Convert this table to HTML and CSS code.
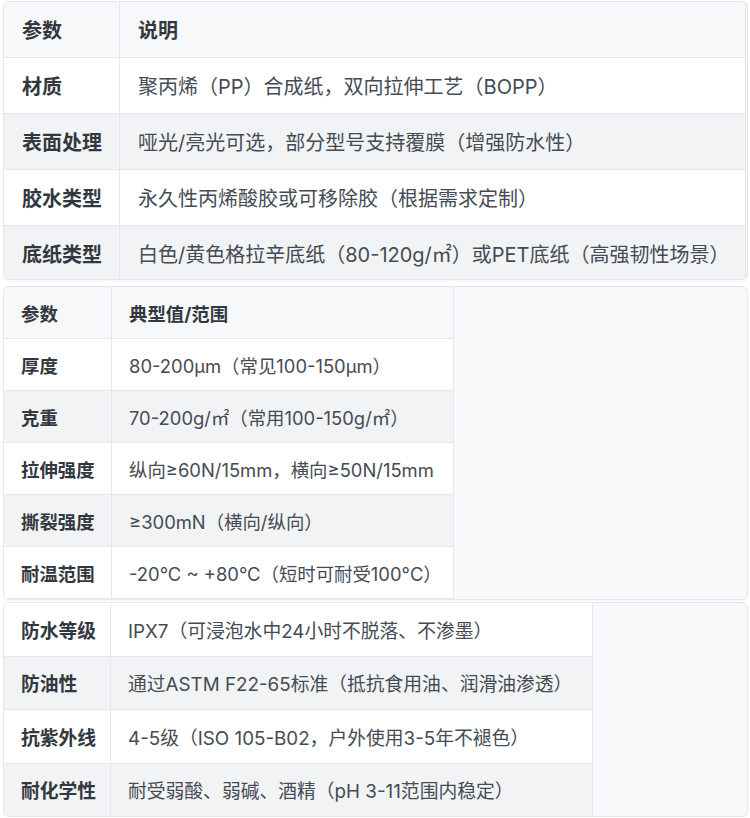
FILE: index.html
```html
<!DOCTYPE html>
<html lang="zh-CN">
<head>
<meta charset="utf-8">
<title>参数表</title>
<link rel="stylesheet" href="styles.css">
</head>
<body>
<div class="page">
  <div class="card card-a">
    <table class="spec spec-a">
      <colgroup><col class="c1-a"><col></colgroup>
      <thead>
        <tr><th>参数</th><th>说明</th></tr>
      </thead>
      <tbody>
        <tr><td class="k">材质</td><td>聚丙烯（PP）合成纸，双向拉伸工艺（BOPP）</td></tr>
        <tr class="alt"><td class="k">表面处理</td><td>哑光/亮光可选，部分型号支持覆膜（增强防水性）</td></tr>
        <tr><td class="k">胶水类型</td><td>永久性丙烯酸胶或可移除胶（根据需求定制）</td></tr>
        <tr class="alt"><td class="k">底纸类型</td><td>白色/黄色格拉辛底纸（80-120g/㎡）或PET底纸（高强韧性场景）</td></tr>
      </tbody>
    </table>
  </div>

  <div class="card card-b">
    <table class="spec spec-b">
      <colgroup><col class="c1-b"><col class="c2-b"></colgroup>
      <thead>
        <tr><th>参数</th><th>典型值/范围</th></tr>
      </thead>
      <tbody>
        <tr><td class="k">厚度</td><td>80-200μm（常见100-150μm）</td></tr>
        <tr class="alt"><td class="k">克重</td><td>70-200g/㎡（常用100-150g/㎡）</td></tr>
        <tr><td class="k">拉伸强度</td><td>纵向≥60N/15mm，横向≥50N/15mm</td></tr>
        <tr class="alt"><td class="k">撕裂强度</td><td>≥300mN（横向/纵向）</td></tr>
        <tr><td class="k">耐温范围</td><td>-20°C ~ +80°C（短时可耐受100°C）</td></tr>
      </tbody>
    </table>
  </div>

  <div class="card card-c">
    <table class="spec spec-c">
      <colgroup><col class="c1-c"><col class="c2-c"></colgroup>
      <tbody>
        <tr><td class="k">防水等级</td><td>IPX7（可浸泡水中24小时不脱落、不渗墨）</td></tr>
        <tr class="alt"><td class="k">防油性</td><td>通过ASTM F22-65标准（抵抗食用油、润滑油渗透）</td></tr>
        <tr><td class="k">抗紫外线</td><td>4-5级（ISO 105-B02，户外使用3-5年不褪色）</td></tr>
        <tr class="alt"><td class="k">耐化学性</td><td>耐受弱酸、弱碱、酒精（pH 3-11范围内稳定）</td></tr>
      </tbody>
    </table>
  </div>
</div>
</body>
</html>
```

FILE: styles.css
```css
html, body {
  margin: 0;
  padding: 0;
  background: #ffffff;
}

body {
  font-family: "Inter", "Noto Sans CJK SC", "Noto Sans", sans-serif;
  color: #454b54;
}

.page {
  padding: 1px 2px 0 3px;
  display: flex;
  flex-direction: column;
}

.card {
  background: #f8f9fb;
  border: 1px solid #e4e7ec;
  border-radius: 6px;
  overflow: hidden;
  box-shadow: 0 1px 2px rgba(0, 0, 0, 0.04);
}

.card-a { height: 277px; }
.card-b { margin-top: 6px; height: 312px; }
.card-c { margin-top: 2px; height: 213px; }

.spec {
  border-collapse: collapse;
  table-layout: fixed;
}

.spec th,
.spec td {
  border: 1px solid #e4e7ec;
  text-align: left;
  vertical-align: middle;
  white-space: nowrap;
  padding: 0 0 0 17px;
}

.spec th {
  background: #f7f8fa;
  font-weight: 700;
  color: #333840;
}

.spec td { background: #ffffff; }
.spec tr.alt td { background: #f2f3f5; }

.spec td.k {
  font-weight: 700;
  color: #333840;
}

/* first card */
.spec-a { width: 100%; font-size: 20px; margin-top: -1px; margin-left: -1px; }
.spec-a th, .spec-a td { height: 55px; padding-left: 18px; }
.c1-a { width: 116px; }

/* second card */
.spec-b { font-size: 18.4px; margin-top: -1px; margin-left: -1px; }
.spec-b th, .spec-b td { height: 51px; }
.c1-b { width: 108px; }
.c2-b { width: 342px; }

/* third card */
.spec-c { font-size: 18.8px; margin-top: -1px; margin-left: -1px; }
.spec-c td { height: 52.5px; }
.c1-c { width: 107px; }
.c2-c { width: 482px; }
```
